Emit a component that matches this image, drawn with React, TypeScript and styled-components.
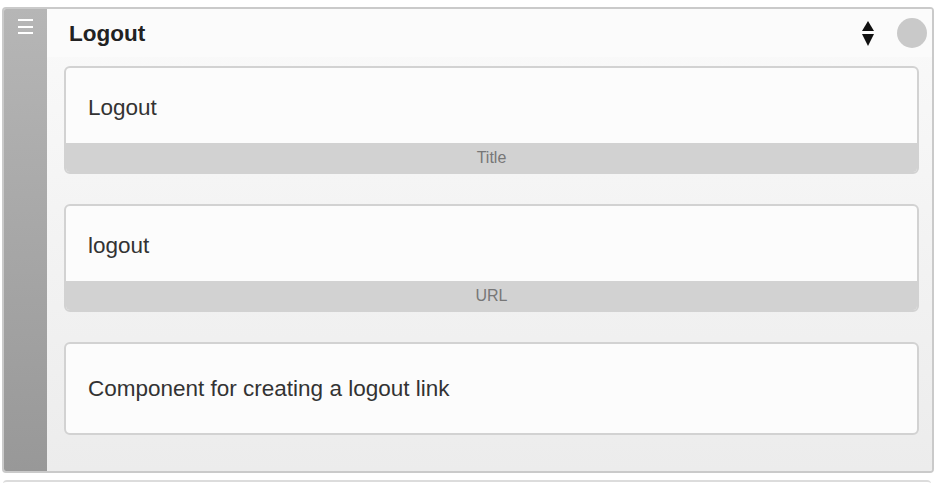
import React from 'react';
import styled, { createGlobalStyle } from 'styled-components';

const GlobalStyle = createGlobalStyle`
  html, body {
    margin: 0;
    padding: 0;
    background: #ffffff;
    font-family: "Liberation Sans", Arial, sans-serif;
  }
`;

const Page = styled.div`
  padding: 7px 16px 0 2px;
  height: 483px;
  overflow: hidden;
  box-sizing: border-box;
`;

const Panel = styled.div`
  display: flex;
  height: 466px;
  border: 2px solid #cacaca;
  border-radius: 4px;
  overflow: hidden;
  box-sizing: border-box;
`;

const NextPanel = styled.div`
  margin: 7px 3px 0 1px;
  height: 20px;
  border-top: 2px solid #dcdcdc;
  border-radius: 4px 4px 0 0;
`;

const Sidebar = styled.div`
  width: 43px;
  flex: none;
  background: linear-gradient(to bottom, #b6b6b6, #989898);
  display: flex;
  justify-content: center;
  padding-top: 10px;
  box-sizing: border-box;
`;

const Hamburger = styled.div`
  width: 15px;
  height: 15px;
  margin-left: -1px;
  display: flex;
  flex-direction: column;
  justify-content: space-between;

  span {
    display: block;
    height: 2px;
    background: #ffffff;
  }
`;

const Main = styled.div`
  flex: 1;
  display: flex;
  flex-direction: column;
  background: linear-gradient(to bottom, #fafafa, #ececec);
`;

const Header = styled.div`
  height: 48px;
  display: flex;
  align-items: center;
  padding: 0 5px 0 22px;
  background: #fbfbfb;
`;

const HeaderTitle = styled.h1`
  flex: 1;
  margin: 2px 0 0;
  font-size: 22.5px;
  font-weight: bold;
  color: #222;
`;

const Sorter = styled.svg`
  width: 12px;
  height: 26px;
  margin-right: 23px;
  margin-top: 2px;
`;

const Dot = styled.div`
  width: 30px;
  height: 30px;
  border-radius: 50%;
  background: #c9c9c9;
`;

const Body = styled.div`
  display: flex;
  flex-direction: column;
  gap: 30px;
  padding: 9px 13px 0 17px;
`;

const Card = styled.div`
  border: 2px solid #d2d2d2;
  border-radius: 6px;
  background: #fcfcfc;
  overflow: hidden;
  display: flex;
  flex-direction: column;
`;

const FieldText = styled.div<{ $tall?: boolean }>`
  height: ${p => (p.$tall ? '89px' : '75px')};
  display: flex;
  align-items: center;
  padding: ${p => (p.$tall ? '0' : '5px')} 22px 0;
  box-sizing: border-box;
  font-size: 22.5px;
  color: #333;
`;

const FieldLabel = styled.div`
  height: 29px;
  background: #d2d2d2;
  color: #777;
  font-size: 16px;
  display: flex;
  align-items: center;
  justify-content: center;
`;

export default function App() {
  return (
    <>
      <GlobalStyle />
      <Page>
        <Panel>
          <Sidebar>
            <Hamburger>
              <span />
              <span />
              <span />
            </Hamburger>
          </Sidebar>
          <Main>
            <Header>
              <HeaderTitle>Logout</HeaderTitle>
              <Sorter viewBox="0 0 12 26">
                <polygon points="6,0 12,10 0,10" fill="#111" />
                <polygon points="0,13 12,13 6,25" fill="#111" />
              </Sorter>
              <Dot />
            </Header>
            <Body>
              <Card>
                <FieldText>Logout</FieldText>
                <FieldLabel>Title</FieldLabel>
              </Card>
              <Card>
                <FieldText>logout</FieldText>
                <FieldLabel>URL</FieldLabel>
              </Card>
              <Card>
                <FieldText $tall>Component for creating a logout link</FieldText>
              </Card>
            </Body>
          </Main>
        </Panel>
        <NextPanel />
      </Page>
    </>
  );
}
